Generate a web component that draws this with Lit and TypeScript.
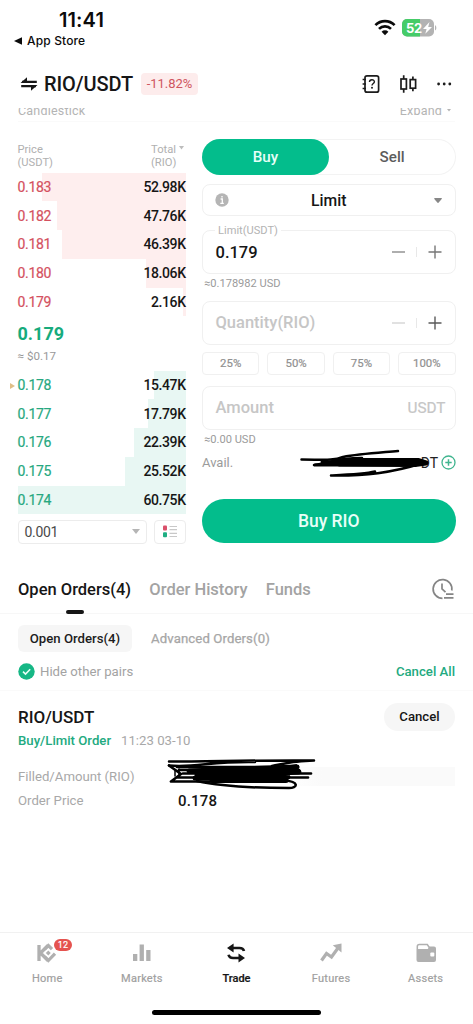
import { LitElement, html, css, svg } from "lit";
import { customElement } from "lit/decorators.js";

interface Level {
  price: string;
  total: string;
  depth: number;
}

const ASKS: Level[] = [
  { price: "0.183", total: "52.98K", depth: 144 },
  { price: "0.182", total: "47.76K", depth: 129 },
  { price: "0.181", total: "46.39K", depth: 124 },
  { price: "0.180", total: "18.06K", depth: 40 },
  { price: "0.179", total: "2.16K", depth: 3 },
];

const BIDS: Level[] = [
  { price: "0.178", total: "15.47K", depth: 32 },
  { price: "0.177", total: "17.79K", depth: 38 },
  { price: "0.176", total: "22.39K", depth: 52 },
  { price: "0.175", total: "25.52K", depth: 61 },
  { price: "0.174", total: "60.75K", depth: 168 },
];

@customElement("status-bar")
class StatusBar extends LitElement {
  static styles = css`
    :host {
      display: flex;
      justify-content: space-between;
      height: 64px;
      font-family: Inter, "Liberation Sans", sans-serif;
      color: #0b0b0b;
    }
    .left {
      padding-top: 8px;
    }
    .time {
      margin-left: 59px;
      font-size: 20px;
      line-height: 24px;
      font-weight: 600;
      letter-spacing: 0.1px;
    }
    .back {
      display: flex;
      align-items: center;
      gap: 5px;
      margin-left: 14px;
      margin-top: 1px;
      font-size: 12px;
      line-height: 16px;
      font-weight: 500;
      letter-spacing: 0.15px;
    }
    .right {
      display: flex;
      align-items: flex-start;
      gap: 6px;
      padding: 19px 36px 0 0;
    }
    .pct {
      font: 700 13px Inter, sans-serif;
      letter-spacing: -0.3px;
    }
    svg {
      display: block;
    }
  `;
  render() {
    return html`
      <div class="left">
        <div class="time">11:41</div>
        <div class="back">
          <svg width="8" height="8" viewBox="0 0 8 8"><path d="M0 4 8 0.2v7.6z" fill="#0b0b0b" /></svg>
          <span>App Store</span>
        </div>
      </div>
      <div class="right">
        <svg width="22" height="17" viewBox="0 0 22 17">
          <g fill="none" stroke="#0b0b0b" stroke-width="2.7">
            <path d="M1.4 6.1a13.7 13.7 0 0 1 19.2 0" />
            <path d="M5 9.9a8.6 8.6 0 0 1 12 0" />
          </g>
          <path d="M7.6 12.7a4.8 4.8 0 0 1 6.8 0L11 16.2z" fill="#0b0b0b" />
        </svg>
        <svg width="35" height="18" viewBox="0 0 35 18">
          <defs>
            <clipPath id="cell"><rect width="32" height="17.4" rx="5" /></clipPath>
          </defs>
          <g clip-path="url(#cell)">
            <rect width="32" height="18" fill="#b3b3b3" />
            <rect width="18" height="18" fill="#45cc68" />
          </g>
          <path d="M33 6.2c1.8.6 1.8 4.6 0 5.2z" fill="#b3b3b3" />
          <text class="pct" x="4" y="13.5" fill="#fff">52</text>
          <path d="M27.5 3 21 10h3.6l-1.3 4.8L30 8h-3.8z" fill="#fff" />
        </svg>
      </div>
    `;
  }
}

@customElement("pair-header")
class PairHeader extends LitElement {
  static styles = css`
    :host {
      display: block;
    }
    .bar {
      display: flex;
      align-items: center;
      height: 40px;
      padding: 0 21px 0 20px;
    }
    .pair {
      margin-left: 6px;
      font-size: 20px;
      font-weight: 500;
      color: #161616;
      letter-spacing: -0.1px;
    }
    .change {
      margin-left: 8px;
      height: 22px;
      width: 57px;
      text-align: center;
      border-radius: 4px;
      background: #fdecec;
      color: #cf5560;
      font-size: 13px;
      line-height: 22px;
    }
    .tools {
      display: flex;
      align-items: center;
      margin-left: auto;
    }
    .book {
      margin-right: 20px;
    }
    .candles {
      margin-right: 18px;
    }
    .strip {
      display: flex;
      justify-content: space-between;
      align-items: flex-end;
      height: 7px;
      margin: 4px 18px 0;
      overflow: hidden;
      font-size: 12.5px;
      line-height: 9px;
      color: #b4b4b4;
      letter-spacing: 0.2px;
    }
    .more {
      display: flex;
      align-items: flex-end;
      gap: 5px;
      margin-right: 4px;
    }
    .more svg {
      margin-bottom: 3px;
    }
    .rule {
      height: 1px;
      margin: 6px 18px 0;
      background: #fafafa;
    }
    svg {
      display: block;
    }
  `;
  render() {
    return html`
      <div class="bar">
        <svg width="18" height="14" viewBox="0 0 18 14">
          <path d="M2 4.900H16.800M1.200 9.100H16" fill="none" stroke="#161616" stroke-width="2.100" />
          <path d="M.5 5.950 7 .200V5.950zM17.500 8.050 11 13.800V8.050z" fill="#161616" />
        </svg>
        <span class="pair">RIO/USDT</span>
        <span class="change">-11.82%</span>
        <div class="tools">
          <svg class="book" width="18" height="20" viewBox="0 0 18 20">
            <rect x="3" y="1.800" width="13.600" height="16.400" rx="2" fill="none" stroke="#1c1c1c" stroke-width="1.700" />
            <path d="M.6 5.600H4M.6 10H4M.6 14.400H4" stroke="#1c1c1c" stroke-width="1.500" />
            <path d="M7.500 8c0-3 4.900-2.900 4.900-.2 0 1.700-2.400 1.800-2.400 3.800" fill="none" stroke="#1c1c1c" stroke-width="1.400" />
            <circle cx="10" cy="13.700" r="1" fill="#1c1c1c" />
          </svg>
          <svg class="candles" width="19" height="20" viewBox="0 0 19 20">
            <g fill="none" stroke="#1c1c1c" stroke-width="1.700">
              <rect x="1" y="5" width="5.400" height="10" />
              <rect x="10.200" y="5.600" width="5.400" height="8.600" />
              <path d="M3.700 1.200V5M3.700 15v3.800M12.900 2.500v3M12.900 14.200v3" />
            </g>
          </svg>
          <svg width="15" height="4" viewBox="0 0 15 4" fill="#1c1c1c">
            <circle cx="1.600" cy="2" r="1.400" /><circle cx="7.200" cy="2" r="1.400" /><circle cx="12.800" cy="2" r="1.400" />
          </svg>
        </div>
      </div>
      <div class="strip">
        <span>Candlestick</span>
        <span class="more">
          Expand
          <svg width="4" height="3" viewBox="0 0 4 3"><path d="M0 0h4L2 2.600z" fill="#b4b4b4" /></svg>
        </span>
      </div>
      <div class="rule"></div>
    `;
  }
}

@customElement("order-book")
class OrderBook extends LitElement {
  static styles = css`
    :host {
      display: block;
      width: 168.500px;
    }
    .head {
      display: flex;
      justify-content: space-between;
      height: 29.600px;
      color: #b0b0b0;
      font-size: 11.200px;
      line-height: 13px;
    }
    .total {
      display: flex;
      align-items: flex-start;
      gap: 3px;
      width: 35px;
      white-space: nowrap;
    }
    .total svg {
      flex: none;
      margin-top: 3px;
    }
    .row {
      position: relative;
      display: flex;
      align-items: center;
      justify-content: space-between;
      height: 28.750px;
      font-size: 14px;
      color: #161616;
    }
    .depth {
      position: absolute;
      right: 0;
      top: 0;
      bottom: 0;
      background: #feeeee;
    }
    .bid .depth {
      background: #e8f7f3;
    }
    .price,
    .qty {
      position: relative;
      line-height: 16px;
    }
    .qty {
      font-weight: 500;
      letter-spacing: -0.400px;
      margin-right: 0.400px;
    }
    .price {
      color: #d4515f;
      letter-spacing: -0.300px;
      -webkit-text-stroke: 0.200px;
    }
    .bid .price {
      color: #27a880;
    }
    .mark {
      position: absolute;
      left: -8px;
      top: 12px;
    }
    .last {
      height: 35px;
      font-size: 18px;
      font-weight: 700;
      line-height: 35px;
      color: #17ab7c;
    }
    .fiat {
      height: 19.200px;
      font-size: 11.600px;
      line-height: 10px;
      color: #999;
    }
    .foot {
      display: flex;
      justify-content: space-between;
      margin-top: 5.500px;
    }
    .tick,
    .view {
      box-sizing: border-box;
      display: flex;
      align-items: center;
      height: 24px;
      border: 1px solid #ececec;
      border-radius: 4px;
    }
    .tick {
      width: 129px;
      justify-content: space-between;
      padding: 0 6px;
      font-size: 14px;
      letter-spacing: -0.300px;
      color: #4a4a4a;
    }
    .view {
      width: 32px;
      justify-content: center;
    }
    svg {
      display: block;
    }
  `;

  private row(level: Level, bid: boolean, mark = false) {
    return html`
      <div class="row ${bid ? "bid" : "ask"}">
        <span class="depth" style="width:${level.depth}px"></span>
        ${mark
          ? html`<svg class="mark" width="5" height="6" viewBox="0 0 5 6"><path d="M0 0 5 3 0 6z" fill="#dfbe86" /></svg>`
          : ""}
        <span class="price">${level.price}</span>
        <span class="qty">${level.total}</span>
      </div>
    `;
  }

  render() {
    return html`
      <div class="head">
        <div>Price<br />(USDT)</div>
        <div class="total">
          <span>Total<br />(RIO)</span>
          <svg width="5" height="4" viewBox="0 0 5 4"><path d="M0 0h5L2.500 3.500z" fill="#bdbdbd" /></svg>
        </div>
      </div>
      ${ASKS.map((l) => this.row(l, false))}
      <div class="last">0.179</div>
      <div class="fiat">≈ $0.17</div>
      ${BIDS.map((l, i) => this.row(l, true, i === 0))}
      <div class="foot">
        <div class="tick">
          <span>0.001</span>
          <svg width="8" height="5" viewBox="0 0 8 5"><path d="M0 0h8L4 5z" fill="#b5b5b5" /></svg>
        </div>
        <div class="view">
          <svg width="14" height="13" viewBox="0 0 14 13">
            <rect y=".5" width="4" height="5" rx="1" fill="#d9506a" />
            <rect y="7.300" width="4" height="5" rx="1" fill="#1fae83" />
            <path d="M6.500 1.500H14M6.500 4.700H14M6.500 8.300H14M6.500 11.500H14" stroke="#c8c8c8" stroke-width="1.200" />
          </svg>
        </div>
      </div>
    `;
  }
}

@customElement("order-form")
class OrderForm extends LitElement {
  static styles = css`
    :host {
      display: flex;
      flex-direction: column;
      width: 253.500px;
    }
    .box {
      box-sizing: border-box;
      display: flex;
      align-items: center;
      border: 1px solid #f0f0f0;
      border-radius: 8px;
    }
    .side {
      display: flex;
      box-sizing: border-box;
      height: 36px;
      border-radius: 18px;
      box-shadow: inset 0 0 0 1px #f3f3f3;
      font-size: 15.200px;
      line-height: 36px;
      text-align: center;
    }
    .side span {
      flex: 1;
      border-radius: 18px;
      color: #5c5c5c;
      font-weight: 500;
    }
    .side .active {
      background: #03bd8c;
      color: #e6fff8;
    }
    .type {
      height: 32px;
      margin-top: 9px;
      padding: 0 12px;
      justify-content: space-between;
      font-size: 15.700px;
      font-weight: 500;
      color: #161616;
    }
    .type span {
      margin-right: 6px;
    }
    .field {
      position: relative;
      height: 44px;
      padding: 0 13px 0 12.500px;
      font-size: 16.500px;
      font-weight: 500;
      color: #c6c6c6;
    }
    .limit {
      margin-top: 14px;
      color: #161616;
    }
    .caption {
      position: absolute;
      left: 12px;
      top: -7px;
      padding: 0 3px;
      background: #fff;
      font-size: 11.100px;
      line-height: 13px;
      font-weight: 400;
      color: #b3b3b3;
    }
    .steps {
      display: flex;
      align-items: center;
      margin-left: auto;
    }
    .hint {
      margin: 3px 0 0 2px;
      font-size: 11.100px;
      line-height: 14px;
      color: #9b9b9b;
    }
    .qty {
      margin-top: 9.500px;
    }
    .parts {
      display: grid;
      grid-template-columns: repeat(4, 1fr);
      gap: 8px;
      margin-top: 7px;
    }
    .part {
      justify-content: center;
      height: 23px;
      border-radius: 4px;
      font-size: 11.400px;
      color: #909090;
      -webkit-text-stroke: 0.200px;
    }
    .amount {
      margin-top: 11px;
      padding-right: 9px;
    }
    .unit {
      margin-left: auto;
      font-size: 15.300px;
      font-weight: 400;
      -webkit-text-stroke: 0.200px;
    }
    .avail {
      display: flex;
      align-items: center;
      height: 32px;
      font-size: 13px;
      color: #9b9b9b;
    }
    .redacted {
      position: relative;
      margin-left: auto;
      margin-right: 2.500px;
      color: #222;
      font-size: 14px;
    }
    .scribble {
      position: absolute;
      right: 6px;
      top: -6px;
    }
    .submit {
      height: 44px;
      margin-top: 20.500px;
      border-radius: 22px;
      background: #03bd8c;
      color: #e8fff8;
      font-size: 17.500px;
      line-height: 44px;
      font-weight: 500;
      text-align: center;
    }
    svg {
      display: block;
    }
  `;

  private stepper(minus: string, plus: string) {
    return html`
      <svg class="steps" width="50" height="14" viewBox="0 0 50 14">
        <path d="M0 7h13" stroke=${minus} stroke-width="1.400" />
        <path d="M24.500 2v10" stroke="#e8e8e8" stroke-width="1" />
        <path d="M36.500 7h13M43 .5v13" stroke=${plus} stroke-width="1.400" />
      </svg>
    `;
  }

  render() {
    return html`
      <div class="side"><span class="active">Buy</span><span>Sell</span></div>
      <div class="box type">
        <svg width="14" height="14" viewBox="0 0 14 14">
          <circle cx="7" cy="7" r="6.700" fill="#b5b5b5" />
          <path d="M5.600 6H7.300V10.200M5.300 10.400H8.800M7 3v1.600" fill="none" stroke="#fff" stroke-width="1.300" />
        </svg>
        <span>Limit</span>
        <svg width="8" height="5" viewBox="0 0 8 5"><path d="M.3 0H7.700Q8 .4 7.700 1L4.500 4.800Q4 5 3.500 4.800L.3 1z" fill="#878787" /></svg>
      </div>
      <div class="box field limit">
        <span class="caption">Limit(USDT)</span>
        <span>0.179</span>
        ${this.stepper("#8b8b8b", "#777")}
      </div>
      <div class="hint">≈0.178982 USD</div>
      <div class="box field qty">
        <span>Quantity(RIO)</span>
        ${this.stepper("#d4d4d4", "#5a5a5a")}
      </div>
      <div class="parts">
        ${["25%", "50%", "75%", "100%"].map((p) => html`<div class="box part">${p}</div>`)}
      </div>
      <div class="box field amount"><span>Amount</span><span class="unit">USDT</span></div>
      <div class="hint">≈0.00 USD</div>
      <div class="avail">
        <span>Avail.</span>
        <span class="redacted">
          DT
          <svg class="scribble" width="132" height="29" viewBox="0 0 132 29">
            <g fill="none" stroke="#000" stroke-linecap="round" stroke-linejoin="round">
              <path d="M1.500 10.500C22 10.500 33 12 43 8 58 5 75 4 98 2" stroke-width="2.500" />
              <path d="M14 16C30 14 34 9 62 9M31 26.500C53 25.500 65 25 75 22.500M31 26.500C65 27 91 24 123 14" stroke-width="2.500" />
              <path d="M34 13.500 60 11.500H118L126 14 115 15.500 40 15z" stroke-width="5" fill="#000" />
              <path d="M15 16H115M22 13H40" stroke-width="3" />
            </g>
          </svg>
        </span>
        <svg width="15" height="15" viewBox="0 0 15 15">
          <circle cx="7.500" cy="7.500" r="6.500" fill="none" stroke="#40b58f" stroke-width="1.300" />
          <path d="M4.300 7.500h6.400M7.500 4.300v6.400" stroke="#40b58f" stroke-width="1.500" />
        </svg>
      </div>
      <div class="submit">Buy RIO</div>
    `;
  }
}

@customElement("open-orders")
class OpenOrders extends LitElement {
  static styles = css`
    :host {
      display: block;
      margin-top: 25px;
    }
    .tabs {
      display: flex;
      align-items: center;
      gap: 18.200px;
      height: 44px;
      padding: 0 18px;
      border-bottom: 1px solid #f7f7f7;
      font-size: 16.500px;
      font-weight: 500;
      color: #a3a3a3;
    }
    .tab {
      position: relative;
      line-height: 41px;
      height: 44px;
      white-space: nowrap;
    }
    .on {
      color: #161616;
    }
    .on::after {
      content: "";
      position: absolute;
      left: 50%;
      bottom: -1px;
      width: 18px;
      height: 4px;
      margin-left: -9px;
      border-radius: 2px;
      background: #161616;
    }
    .clock {
      margin: -4px 0 0 auto;
    }
    .filters {
      display: flex;
      align-items: center;
      gap: 19px;
      margin-top: 11px;
      padding: 0 18px;
      font-size: 13.200px;
      color: #a6a6a6;
      line-height: 27px;
    }
    .advanced {
      -webkit-text-stroke: 0.250px;
      letter-spacing: 0.100px;
    }
    .pill {
      width: 114px;
      border-radius: 6px;
      background: #f6f6f6;
      color: #1d1d1d;
      font-weight: 500;
      text-align: center;
    }
    .hide {
      display: flex;
      align-items: center;
      gap: 5px;
      height: 38.500px;
      padding: 0 18px;
      font-size: 13.200px;
      color: #a3a3a3;
      border-bottom: 1px solid #fafafa;
    }
    .all {
      margin-left: auto;
      color: #22aa80;
      font-weight: 500;
    }
    .order {
      padding: 12px 18px 0;
    }
    .top {
      display: flex;
      align-items: center;
      justify-content: space-between;
      height: 28px;
      font-size: 17px;
      color: #161616;
      font-weight: 500;
    }
    .cancel {
      width: 71px;
      border-radius: 14px;
      background: #f6f6f6;
      font-size: 13.200px;
      line-height: 28px;
      text-align: center;
    }
    .kind {
      display: flex;
      gap: 10px;
      font-size: 13.200px;
      line-height: 20px;
      color: #a8a8a8;
    }
    .buy {
      color: #22aa80;
      font-weight: 500;
    }
    .line {
      display: grid;
      grid-template-columns: 160px 1fr;
      align-items: center;
      height: 24.500px;
      font-size: 13.200px;
      color: #a8a8a8;
    }
    .first {
      margin-top: 12.500px;
    }
    .value {
      font-size: 15px;
      color: #161616;
      font-weight: 500;
      letter-spacing: 0.200px;
    }
    .bar {
      position: relative;
      height: 19px;
      background: linear-gradient(90deg, #fff 38%, #fafafa 52%);
    }
    .scribble {
      position: absolute;
      left: -11px;
      top: -9px;
    }
    svg {
      display: block;
    }
  `;
  render() {
    return html`
      <div class="tabs">
        <span class="tab on">Open Orders(4)</span>
        <span class="tab">Order History</span>
        <span class="tab">Funds</span>
        <svg class="clock" width="23" height="22" viewBox="0 0 23 22">
          <g fill="none" stroke="#858585" stroke-width="1.700">
            <path d="M10.500 20.400A9.400 9.400 0 1 1 19.800 12.500M10 5.500V11L13.500 14.200" />
            <path d="M14 16.200h7.500M12 19.800h9.500" />
          </g>
        </svg>
      </div>
      <div class="filters"><span class="pill">Open Orders(4)</span><span class="advanced">Advanced Orders(0)</span></div>
      <div class="hide">
        <svg width="17" height="17" viewBox="0 0 17 17">
          <circle cx="8.500" cy="8.500" r="8.200" fill="#16b785" />
          <path d="m5 8.700 2.500 2.400 4.700-4.800" fill="none" stroke="#e9fff7" stroke-width="1.600" />
        </svg>
        <span>Hide other pairs</span>
        <span class="all">Cancel All</span>
      </div>
      <div class="order">
        <div class="top"><span>RIO/USDT</span><span class="cancel">Cancel</span></div>
        <div class="kind"><span class="buy">Buy/Limit Order</span><span>11:23 03-10</span></div>
        <div class="line first">
          <span>Filled/Amount (RIO)</span>
          <div class="bar">
            <svg class="scribble" width="150" height="34" viewBox="0 0 150 34">
              <g fill="none" stroke="#000" stroke-linecap="round" stroke-linejoin="round">
                <path d="M2 3.500C45 3.500 90 2 147 2.500C125 3 120 5 105 8M2 7.500C28 10 45 3 88 4" stroke-width="2.500" />
                <path d="M2 7.500 14 16 4 23.500H45M10 9H131M12 12H132M16 15.500H144M10 19.500H141" stroke-width="2.700" />
                <path d="M22 13 130 9 30 17 132 14 28 20 121 19 45 22.500H119" stroke-width="5" />
                <path d="M30 23C48 27 70 30 122 30C130 30 134 24 116 22" stroke-width="2.500" />
                <path d="M8 13v5M12 11v8" stroke-width="1.500" />
              </g>
            </svg>
          </div>
        </div>
        <div class="line"><span>Order Price</span><span class="value">0.178</span></div>
      </div>
    `;
  }
}

const TAB_ICONS = {
  Home: svg`
    <path d="M3 3V19M4 11.500 12 3.500M4 10.500 12 18.500" fill="none" stroke="#b0b0b0" stroke-width="3.300" />
    <path d="M8.500 7.300 12.300 3.500 16 7.200M8.500 14.700 12.300 18.500 19 11.600" fill="none" stroke="#b0b0b0" stroke-width="3.200" />
    <rect x="10.500" y="9.200" width="3.500" height="3.500" transform="rotate(45 12.250 11)" fill="#b0b0b0" />`,
  Markets: svg`
    <rect x="2" y="12" width="4.300" height="7" fill="#b0b0b0" />
    <rect x="8.600" y="2.500" width="4.300" height="16.500" fill="#b0b0b0" />
    <rect x="15.200" y="8" width="4.300" height="11" fill="#b0b0b0" />`,
  Trade: svg`
    <path d="M6 6h8.500c2.400 0 4 1 4.500 3M16.500 16H8c-2.600 0-4-1.200-4.500-3.200" fill="none" stroke="#161616" stroke-width="2.600" />
    <path d="M8.600 1.500V10.500L2 6zM13.500 11.500V20.500L20 16z" fill="#161616" />`,
  Futures: svg`
    <path d="M1.500 18.500 6.500 11.500 11.500 15 18 6" fill="none" stroke="#b0b0b0" stroke-width="3.200" />
    <path d="M12.800 3.200 21.500 1.500V10.500z" fill="#b0b0b0" />`,
  Assets: svg`
    <path d="M2.300 7V4.500a2 2 0 0 1 2-2h8l2 3" fill="none" stroke="#b0b0b0" stroke-width="1.500" />
    <path d="M1.500 7h11.300l1.500-2.500H19a2 2 0 0 1 2 2V18a2 2 0 0 1-2 2H3.500a2 2 0 0 1-2-2z" fill="#b0b0b0" />
    <rect x="15.300" y="10.500" width="4" height="4" rx="1" fill="#fff" />`,
};

@customElement("tab-bar")
class TabBar extends LitElement {
  static styles = css`
    :host {
      display: block;
      margin-top: auto;
      height: 91px;
      border-top: 1px solid #f1f1f1;
    }
    .tabs {
      display: grid;
      grid-template-columns: repeat(5, 1fr);
      height: 77px;
    }
    .tab {
      position: relative;
      display: flex;
      flex-direction: column;
      align-items: center;
      padding-top: 9px;
      gap: 7px;
      font-size: 11px;
      line-height: 16px;
      letter-spacing: 0.250px;
      color: #a0a0a0;
      -webkit-text-stroke: 0.200px;
    }
    .on {
      color: #161616;
      font-weight: 500;
      letter-spacing: 0;
    }
    .badge {
      position: absolute;
      left: 54px;
      top: 6px;
      width: 18px;
      height: 12px;
      border-radius: 6px;
      background: #e5534f;
      color: #fff;
      font-size: 9px;
      line-height: 12px;
      text-align: center;
    }
    .home {
      width: 169px;
      height: 5px;
      margin: 0 auto;
      border-radius: 3px;
      background: #000;
    }
    svg {
      display: block;
    }
  `;
  render() {
    return html`
      <div class="tabs">
        ${Object.entries(TAB_ICONS).map(
          ([name, icon]) => html`
            <div class="tab ${name === "Trade" ? "on" : ""}">
              <svg width="22" height="22" viewBox="0 0 22 22">${icon}</svg>
              <span>${name}</span>
              ${name === "Home" ? html`<span class="badge">12</span>` : ""}
            </div>
          `
        )}
      </div>
      <div class="home"></div>
    `;
  }
}

@customElement("app-root")
class AppRoot extends LitElement {
  static styles = css`
    :host {
      display: flex;
      flex-direction: column;
      box-sizing: border-box;
      width: 473px;
      height: 1024px;
      overflow: hidden;
      background: #fff;
      font-family: Roboto, "Liberation Sans", sans-serif;
    }
    .trade {
      display: flex;
      justify-content: space-between;
      padding: 0 17.500px;
    }
    .book {
      margin-top: 21px;
    }
    .form {
      margin-top: 17px;
    }
  `;
  render() {
    return html`
      <status-bar></status-bar>
      <pair-header></pair-header>
      <div class="trade">
        <order-book class="book"></order-book>
        <order-form class="form"></order-form>
      </div>
      <open-orders></open-orders>
      <tab-bar></tab-bar>
    `;
  }
}
